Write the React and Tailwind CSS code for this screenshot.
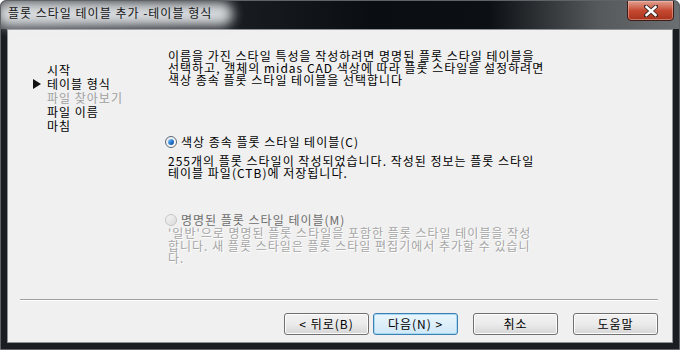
import React from 'react';

const navItems = [
  { label: '시작' },
  { label: '테이블 형식', current: true },
  { label: '파일 찾아보기', disabled: true },
  { label: '파일 이름' },
  { label: '마침' },
];

const Radio = ({ checked, disabled }) => (
  <span
    className={`w-[12px] h-[12px] rounded-full border flex items-center justify-center shrink-0 ${
      disabled
        ? 'border-[#c4c4c4] bg-gradient-to-br from-[#f4f4f4] to-[#dcdcdc]'
        : 'border-[#5a6a7a] bg-gradient-to-br from-[#e8e8e8] to-[#ffffff]'
    }`}
  >
    {checked && (
      <span className="w-[6px] h-[6px] rounded-full bg-gradient-to-br from-[#9fd4ff] via-[#2a7fd4] to-[#0c4a8a]" />
    )}
  </span>
);

const Button = ({ children, primary }) => (
  <button
    className={`w-[85px] h-[22px] rounded-[3px] border text-[12px] leading-none tracking-[1px] text-black flex items-center justify-center ${
      primary
        ? 'border-[#3c7fb1] bg-gradient-to-b from-[#eaf6fd] to-[#d0e8f6] shadow-[inset_0_0_0_1px_#a7d9f5]'
        : 'border-[#707070] bg-gradient-to-b from-[#f2f2f2] via-[#ebebeb] to-[#d6d6d6] shadow-[inset_0_0_0_1px_#fcfcfc]'
    }`}
  >
    {children}
  </button>
);

export default function App() {
  return (
    <div
      className="w-[680px] h-[350px] bg-[#1a1e23] flex flex-col rounded-t-[6px] border border-[#5f6368] overflow-hidden"
      style={{ fontFamily: '"Noto Sans CJK KR", "Noto Sans", sans-serif' }}
    >
      {/* Title bar */}
      <div className="h-[28px] shrink-0 relative bg-[linear-gradient(to_right,#4a4e52_0%,#1c2024_30%,#0a0e12_55%,#0c1014_72%,#55595c_88%,#6c6f71_100%)]">
        <div className="absolute left-[-4px] top-[1px] w-[236px] h-[24px] rounded-[12px] bg-[#e9ecef] blur-[6px] opacity-90" />
        <div className="relative pl-[7px] pt-[5px] text-[12px] leading-[14px] tracking-[1px] text-[#151515] whitespace-nowrap">
          플롯 스타일 테이블 추가 -테이블 형식
        </div>
        <button className="absolute right-[5px] top-[-1px] w-[47px] h-[21px] rounded-b-[4px] border border-[#3b1d18] bg-gradient-to-b from-[#e0a090] via-[#c64a32] to-[#a8321c] shadow-[inset_0_0_0_1px_rgba(255,200,190,0.45)] flex items-center justify-center">
          <svg width="14" height="12" viewBox="0 0 14 12">
            <path d="M2 1.5 L12 10.5 M12 1.5 L2 10.5" stroke="#3a2a28" strokeWidth="4.2" strokeLinecap="square" />
            <path d="M2.5 2 L11.5 10 M11.5 2 L2.5 10" stroke="#ffffff" strokeWidth="2.4" strokeLinecap="square" />
          </svg>
        </button>
      </div>

      {/* Client area */}
      <div className="flex-1 mx-[6px] mb-[6px] bg-[#f0f0f0] border border-[#8d9297] flex flex-col text-[12px] tracking-[1px] text-black">
        <div className="flex-1 flex">
          {/* Steps */}
          <div className="w-[152px] shrink-0 pl-[25px] pt-[33px] flex flex-col">
            {navItems.map((item) => (
              <div key={item.label} className="h-[14px] flex items-center leading-[14px] whitespace-nowrap">
                <span className="w-[14px] flex items-center">
                  {item.current && (
                    <svg width="8" height="10" viewBox="0 0 8 10">
                      <polygon points="0,0 8,5 0,10" fill="#111" />
                    </svg>
                  )}
                </span>
                <span className={item.disabled ? 'text-[#a0a0a0]' : 'text-black'}>{item.label}</span>
              </div>
            ))}
          </div>

          {/* Content */}
          <div className="flex-1 pt-[20px] pl-[5px] flex flex-col">
            <p className="ml-[3px] leading-[12px] whitespace-nowrap">
              이름을 가진 스타일 특성을 작성하려면 명명된 플롯 스타일 테이블을
              <br />
              선택하고, 객체의 midas CAD 색상에 따라 플롯 스타일을 설정하려면
              <br />
              색상 종속 플롯 스타일 테이블을 선택합니다
            </p>

            <label className="mt-[49px] h-[13px] flex items-center gap-[4px] leading-[13px] whitespace-nowrap">
              <Radio checked />
              <span>색상 종속 플롯 스타일 테이블(C)</span>
            </label>
            <p className="ml-[3px] mt-[7px] leading-[12px] whitespace-nowrap">
              255개의 플롯 스타일이 작성되었습니다. 작성된 정보는 플롯 스타일
              <br />
              테이블 파일(CTB)에 저장됩니다.
            </p>

            <label className="mt-[34px] h-[13px] flex items-center gap-[4px] leading-[13px] whitespace-nowrap">
              <Radio disabled />
              <span className="text-[#6d6d6d]">명명된 플롯 스타일 테이블(M)</span>
            </label>
            <p className="ml-[3px] mt-[1px] leading-[12.5px] whitespace-nowrap text-[#a6a6a6] [text-shadow:1px_1px_0_#ffffff]">
              '일반'으로 명명된 플롯 스타일을 포함한 플롯 스타일 테이블을 작성
              <br />
              합니다. 새 플롯 스타일은 플롯 스타일 편집기에서 추가할 수 있습니
              <br />
              다.
            </p>
          </div>
        </div>

        {/* Separator */}
        <div className="ml-[12px] mr-[14px] border-t border-[#a0a0a0] border-b border-b-white" />

        {/* Buttons */}
        <div className="h-[41px] flex items-start justify-end pt-[12px] pr-[14px]">
          <Button>&lt; 뒤로(B)</Button>
          <div className="w-[4px]" />
          <Button primary>다음(N) &gt;</Button>
          <div className="w-[15px]" />
          <Button>취소</Button>
          <div className="w-[15px]" />
          <Button>도움말</Button>
        </div>
      </div>
    </div>
  );
}
